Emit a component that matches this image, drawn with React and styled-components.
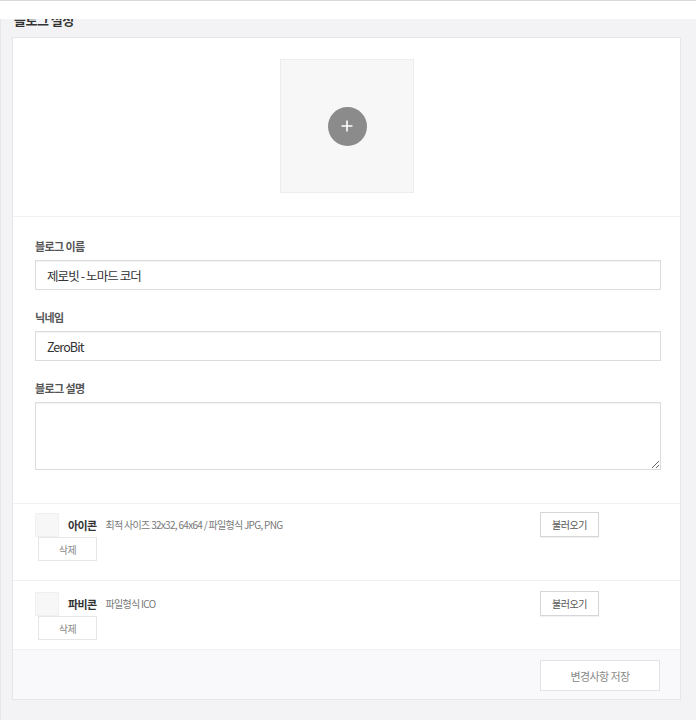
import React from "react";
import styled, { createGlobalStyle } from "styled-components";

const GlobalStyle = createGlobalStyle`
  body {
    margin: 0;
    background: #f3f3f5;
    font-family: "Noto Sans CJK KR", "Noto Sans", sans-serif;
    color: #333;
  }
  * { box-sizing: border-box; }
`;

function IconRow({ title, desc }) {
  return (
    <Row>
      <RowTop>
        <Thumb />
        <RowTitle>{title}</RowTitle>
        <RowDesc>{desc}</RowDesc>
        <LoadButton>불러오기</LoadButton>
      </RowTop>
      <DeleteButton>삭제</DeleteButton>
    </Row>
  );
}

export default function App() {
  return (
    <>
      <GlobalStyle />
      <TopBar />
      <Page>
        <PageTitle>블로그 설정</PageTitle>
        <Card>
          <ImageSection>
            <ImageBox>
              <AddCircle>
                <svg width="14" height="14" viewBox="0 0 14 14">
                  <path d="M7 1.5v11M1.5 7h11" stroke="#fff" strokeWidth="1.6" />
                </svg>
              </AddCircle>
            </ImageBox>
          </ImageSection>

          <FormSection>
            <Field>
              <Label>블로그 이름</Label>
              <TextInput defaultValue="제로빗 - 노마드 코더" />
            </Field>
            <Field>
              <Label>닉네임</Label>
              <TextInput defaultValue="ZeroBit" />
            </Field>
            <Field>
              <Label>블로그 설명</Label>
              <TextArea />
            </Field>
          </FormSection>

          <IconRow title="아이콘" desc="최적 사이즈 32x32, 64x64 / 파일형식 JPG, PNG" />
          <IconRow title="파비콘" desc="파일형식 ICO" />

          <Footer>
            <SaveButton>변경사항 저장</SaveButton>
          </Footer>
        </Card>
      </Page>
    </>
  );
}

// fixed white header that covers the page title while scrolled
const TopBar = styled.div`
  position: fixed;
  top: 0;
  left: 0;
  right: 0;
  height: 19px;
  background: #fff;
  border-top: 1px solid #d9d9d9;
  z-index: 10;
`;

const Page = styled.div`
  padding: 11px 15px 22px 11px;
  border-left: 1px solid #e6e6e8;
`;

const PageTitle = styled.h2`
  margin: 0 0 8px 2px;
  font-size: 13px;
  line-height: 18px;
  font-weight: bold;
  color: #333;
  letter-spacing: -0.5px;
`;

const Card = styled.div`
  background: #fff;
  border: 1px solid #e6e6e8;
`;

const ImageSection = styled.div`
  display: flex;
  justify-content: center;
  padding: 21px 0 23px;
  border-bottom: 1px solid #f1f1f3;
`;

const ImageBox = styled.div`
  width: 134px;
  height: 134px;
  background: #f7f7f7;
  border: 1px solid #ececec;
  display: flex;
  align-items: center;
  justify-content: center;
  padding-left: 1px;
`;

const AddCircle = styled.div`
  width: 39px;
  height: 39px;
  border-radius: 50%;
  background: #8b8b8b;
  display: flex;
  align-items: center;
  justify-content: center;
`;

const FormSection = styled.div`
  display: flex;
  flex-direction: column;
  gap: 19px;
  padding: 21px 19px 33px 22px;
  border-bottom: 1px solid #f1f1f3;
`;

const Field = styled.div`
  display: flex;
  flex-direction: column;
  gap: 6px;
`;

const Label = styled.label`
  font-size: 11px;
  line-height: 16px;
  font-weight: bold;
  color: #555;
  letter-spacing: -0.6px;
`;

const TextInput = styled.input`
  height: 30px;
  border: 1px solid #dcdcde;
  box-shadow: inset 0 1px 1px rgba(0, 0, 0, 0.05);
  padding: 0 11px;
  font-family: inherit;
  font-size: 12.5px;
  color: #333;
  letter-spacing: -0.9px;
  outline: none;
`;

const TextArea = styled.textarea`
  height: 68px;
  border: 1px solid #dcdcde;
  box-shadow: inset 0 1px 1px rgba(0, 0, 0, 0.05);
  padding: 8px 11px;
  font-family: inherit;
  font-size: 12.5px;
  outline: none;
`;

const Row = styled.div`
  display: flex;
  flex-direction: column;
  padding: 8px 81px 19px 22px;
  border-bottom: 1px solid #f1f1f3;

  &:nth-of-type(4) {
    padding: 10px 81px 9px 22px;
    border-bottom: none;
  }
`;

const RowTop = styled.div`
  display: flex;
  align-items: center;
  height: 25px;
`;

const Thumb = styled.div`
  width: 24px;
  height: 24px;
  background: #f7f7f8;
  border: 1px solid #f0f0f2;
  margin-right: 9px;
`;

const RowTitle = styled.span`
  font-size: 11px;
  font-weight: bold;
  color: #333;
  letter-spacing: -0.6px;
  margin-right: 9px;
`;

const RowDesc = styled.span`
  flex: 1;
  font-size: 10px;
  color: #777;
  letter-spacing: -0.7px;
`;

const SmallButton = styled.button`
  width: 59px;
  height: 25px;
  background: #fff;
  font-family: inherit;
  font-size: 10px;
  letter-spacing: -0.5px;
  padding: 0;
  cursor: pointer;
`;

const LoadButton = styled(SmallButton)`
  border: 1px solid #d6d6d8;
  box-shadow: 0 1px 1px rgba(0, 0, 0, 0.05);
  color: #555;
`;

const DeleteButton = styled(SmallButton)`
  height: 24px;
  margin-left: 3px;
  border: 1px solid #e6e6e8;
  color: #888;
`;

const Footer = styled.div`
  display: flex;
  justify-content: flex-end;
  padding: 10px 20px 8px;
  background: #f9f9fb;
  border-top: 1px solid #f1f1f3;
`;

const SaveButton = styled.button`
  width: 120px;
  height: 31px;
  background: #fff;
  border: 1px solid #e3e3e5;
  font-family: inherit;
  font-size: 11px;
  color: #888;
  letter-spacing: -0.6px;
  cursor: pointer;
`;
